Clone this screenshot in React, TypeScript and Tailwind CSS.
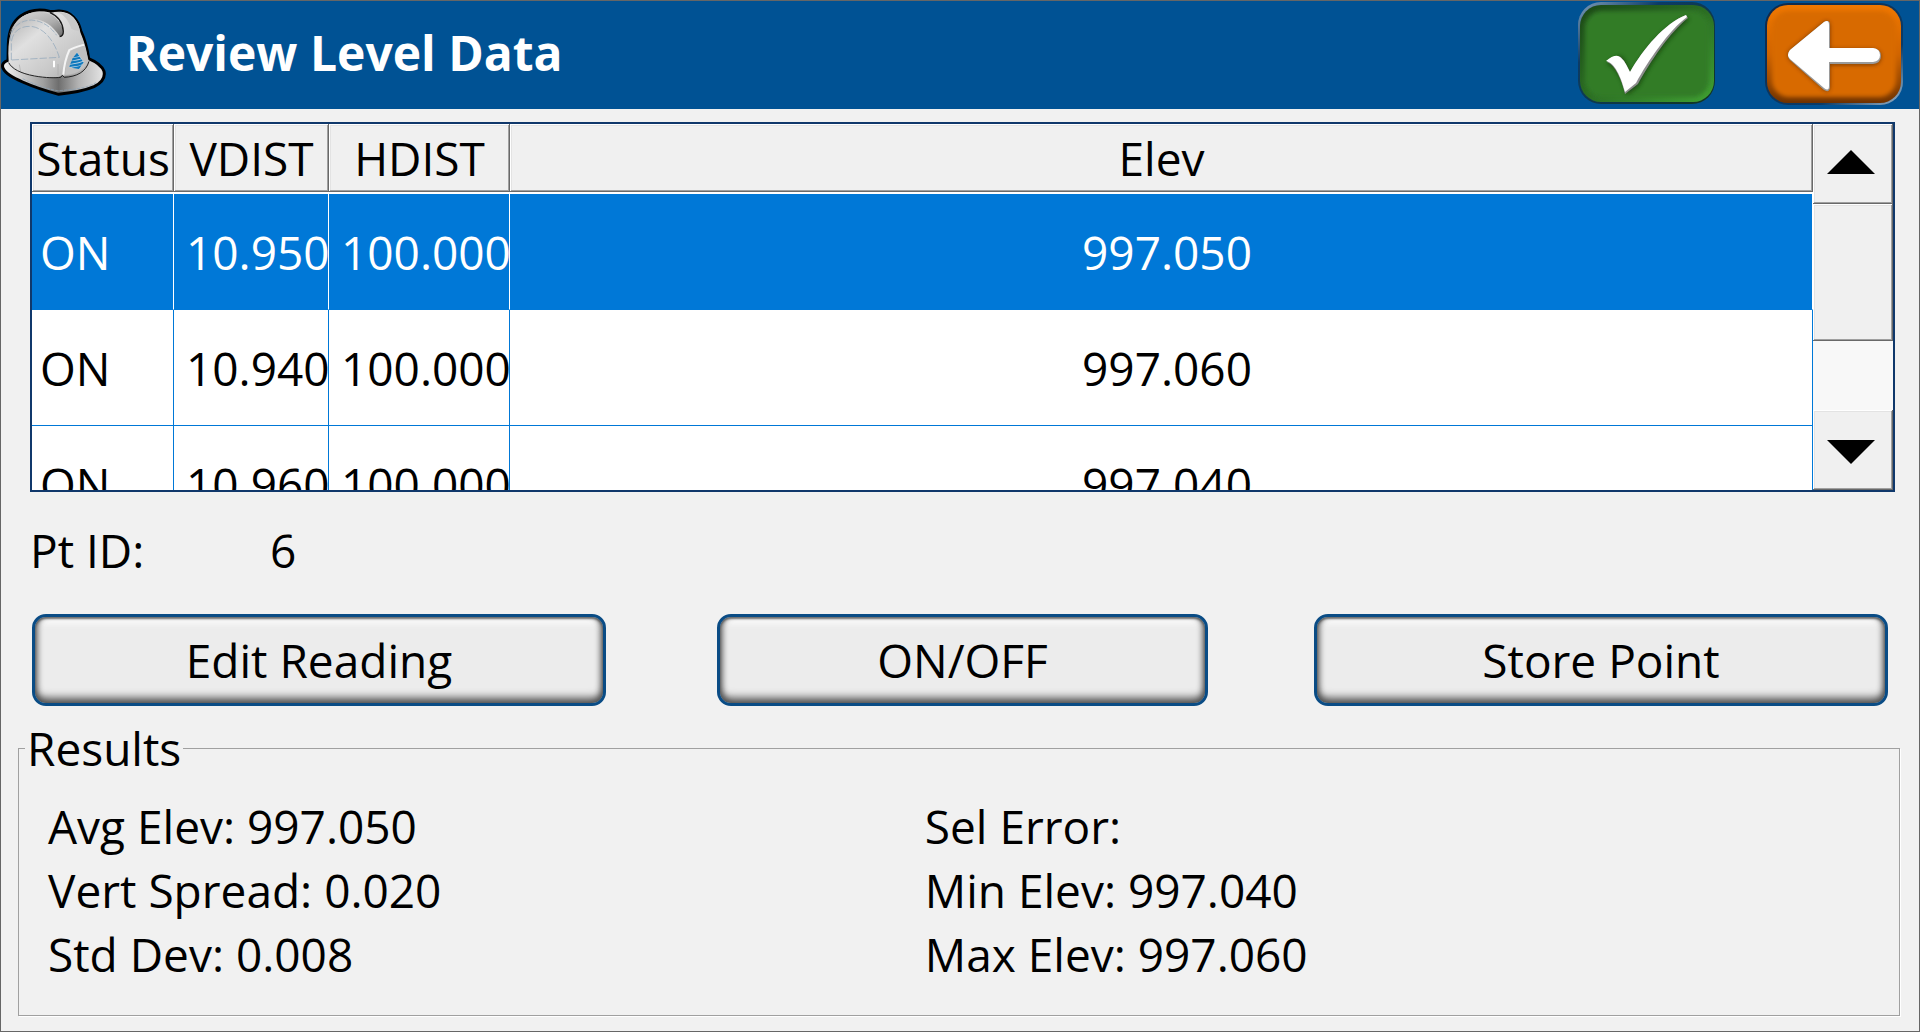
import React, { useState } from 'react'

type Reading = {
    status: string;
    vdist: string;
    hdist: string;
    elev: string;
}

const readings: Reading[] = [
    { status: 'ON', vdist: '10.950', hdist: '100.000', elev: '997.050' },
    { status: 'ON', vdist: '10.940', hdist: '100.000', elev: '997.060' },
    { status: 'ON', vdist: '10.960', hdist: '100.000', elev: '997.040' },
]

// Raised edge shared by the column headers and the scroll bar
const bevel = 'bg-[#f0f0f0] shadow-[inset_-1px_-1px_#696969,inset_1px_1px_#fff,inset_-2px_-2px_#a0a0a0,inset_2px_2px_#e3e3e3]';

const HardHat = () => (
    <svg viewBox="3 3 321 324" className="w-[107px] h-[108px] shrink-0" aria-hidden="true">
        <defs>
            <linearGradient id="shell" x1="0" y1="0" x2="1" y2="1">
                <stop offset="0" stopColor="#a8a8a8" />
                <stop offset="0.35" stopColor="#e0e0e0" />
                <stop offset="0.7" stopColor="#c8c8c8" />
                <stop offset="1" stopColor="#a0a0a0" />
            </linearGradient>
            <linearGradient id="brim" x1="0" y1="0" x2="1" y2="0">
                <stop offset="0" stopColor="#f4f4f4" />
                <stop offset="0.4" stopColor="#a0a0a0" />
                <stop offset="0.55" stopColor="#6e6e6e" />
                <stop offset="0.75" stopColor="#b4b4b4" />
                <stop offset="1" stopColor="#e6e6e6" />
            </linearGradient>
            <linearGradient id="ridge" x1="0" y1="0" x2="1" y2="1">
                <stop offset="0" stopColor="#ededed" />
                <stop offset="0.6" stopColor="#9c9c9c" />
                <stop offset="1" stopColor="#4a4a4a" />
            </linearGradient>
        </defs>
        <path d="M24 181 C10 185 5 195 9 204 C16 222 42 234 68 246 C104 262 142 274 176 283 C212 279 254 272 282 260 C304 249 316 232 312 214 C306 198 290 186 266 176 C262 148 254 118 242 92 C236 62 212 32 176 33 C166 34 158 36 150 34 C122 27 88 30 62 48 C34 68 26 100 25 132 Z" fill="url(#brim)" stroke="#000" strokeWidth="9" strokeLinejoin="round" />
        <path d="M26 184 C22 120 32 76 64 52 C94 32 130 32 152 38 C176 32 204 34 220 52 C234 68 238 84 242 100 C254 128 262 154 265 190 C258 214 226 226 190 228 L186 226 C180 234 140 234 110 230 C74 224 42 212 26 196 Z" fill="url(#shell)" />
        <path d="M28 108 C36 76 66 54 94 56 C130 56 158 76 180 110 C186 108 191 102 190 95 C184 66 164 42 134 38 C94 32 62 46 44 72 C34 86 28 98 28 108 Z" fill="url(#ridge)" opacity="0.75" />
        <path d="M150 38 C174 48 188 68 190 94 C190 104 186 109 179 110" fill="none" stroke="#1a1a1a" strokeWidth="4" />
        <path d="M172 36 C192 44 206 62 214 86 C224 92 234 92 240 94 C236 62 210 32 172 36 Z" fill="#c9c9c9" />
        <path d="M34 180 V126 C38 96 58 78 92 79 C130 82 162 120 178 172 L34 180" fill="none" stroke="#8ba3b8" strokeWidth="2" strokeDasharray="22 6" />
        <path d="M30 122 C32 86 56 62 94 60 C126 62 152 80 170 106" fill="none" stroke="#8ba3b8" strokeWidth="2" strokeDasharray="18 5" />
        <path d="M58 194 L62 216 M174 192 V226" stroke="#aaaaaa" strokeWidth="2" />
        <path d="M162 182 V202" stroke="#ffffff" strokeWidth="6" />
        <path d="M190 224 C192 196 198 172 208 150 C222 142 238 138 252 134" fill="none" stroke="#f4f4f4" strokeWidth="6" />
        <path d="M196 224 C198 196 204 172 212 154 C224 146 240 142 254 138 L266 182 C258 206 232 222 196 224 Z" fill="#c0c0c0" />
        <path d="M26 188 C36 206 60 220 104 228 C138 234 166 234 182 232 L187 226 L193 232 C230 230 258 216 267 184" fill="none" stroke="#222" strokeWidth="3" />
        <path d="M68 236 C100 252 136 266 172 272 C216 270 262 264 288 248" fill="none" stroke="#8ba3b8" strokeWidth="2" strokeDasharray="10 3" />
        {/* blue pyramid */}
        <path d="M231 157 L252 186 L238 208 L207 201 Z" fill="#c4d6e4" />
        <path d="M231 158 L220 172 L231 170 L238 168 Z M218 174 L233 172 L239 170 L243 176 L234 178 L215 182 Z M214 184 L235 181 L244 178 L248 183 L236 187 L211 192 Z M210 194 L236 190 L249 185 L251 187 L247 193 L236 197 L208 201 Z M214 203 L236 199 L245 195 L239 205 L236 207 Z" fill="#1079bd" />
    </svg>
)

const CheckIcon = () => (
    <svg viewBox="0 0 140 108" className="w-[140px] h-[108px]" aria-hidden="true">
        <defs>
            <linearGradient id="greenEdge" x1="0" y1="0" x2="1" y2="1">
                <stop offset="0" stopColor="#1b4716" />
                <stop offset="0.5" stopColor="#2c6e24" />
                <stop offset="1" stopColor="#41a233" />
            </linearGradient>
            <linearGradient id="greenRim" x1="0" y1="0" x2="1" y2="1">
                <stop offset="0" stopColor="#7f9db9" />
                <stop offset="0.3" stopColor="#0c3b66" />
                <stop offset="1" stopColor="#12351f" />
            </linearGradient>
            <filter id="soft"><feGaussianBlur stdDeviation="2" /></filter>
        </defs>
        <rect x="1" y="1" width="137" height="102" rx="23" fill="url(#greenRim)" />
        <rect x="3" y="4" width="134" height="97" rx="21" fill="url(#greenEdge)" />
        <rect x="8" y="10" width="124" height="86" rx="17" fill="#317b26" filter="url(#soft)" />
        <path d="M30 63 Q37 55 43 55 Q47 55 54 73 C67 49 89 23 110 16 L112 19 C94 33 74 62 62 85 L50 94 C45 77 38 65 30 63 Z" fill="#14380f" opacity="0.7" filter="url(#soft)" />
        <path d="M30 61 Q36 54 42 55 Q46 56 53 71 C66 48 88 22 109 14 L111 17 C93 31 73 61 61 83 L48 93 C44 77 38 64 30 61 Z" fill="#8d8d8d" />
        <path d="M29 60 Q36 54 41 55 Q46 56 53 71 C66 48 88 22 109 14 L110 16 C92 29 71 60 59 82 L48 91 C44 76 38 62 29 60 Z" fill="#fff" />
    </svg>
)

const BackIcon = () => (
    <svg viewBox="0 0 140 108" className="w-[140px] h-[108px]" aria-hidden="true">
        <defs>
            <linearGradient id="orangeEdge" x1="0" y1="0" x2="0" y2="1">
                <stop offset="0" stopColor="#f07800" />
                <stop offset="0.5" stopColor="#d06400" />
                <stop offset="1" stopColor="#6e3200" />
            </linearGradient>
            <linearGradient id="orangeRim" x1="0" y1="0" x2="1" y2="1">
                <stop offset="0" stopColor="#10294a" />
                <stop offset="0.7" stopColor="#0c3b66" />
                <stop offset="1" stopColor="#9db4c8" />
            </linearGradient>
        </defs>
        <rect x="1" y="2" width="138" height="102" rx="23" fill="url(#orangeRim)" />
        <rect x="3" y="4" width="134" height="98" rx="21" fill="url(#orangeEdge)" />
        <rect x="8" y="10" width="124" height="86" rx="17" fill="#d86b00" filter="url(#soft)" />
        <path d="M26 49 L60 21 Q65 18 66 24 V48 H109 Q117 49 117 56 Q117 63 109 64 H66 V87 Q65 92 60 89 L26 59 Q22 54 26 49 Z" fill="#5a2a00" opacity="0.7" filter="url(#soft)" />
        <path d="M26 49 L60 21 Q66 18 66 24 V47 H109 Q117 48 117 55 Q117 62 109 63 H66 V87 Q65 92 60 89 L26 59 Q22 54 26 49 Z" fill="#9a9a9a" />
        <path d="M26 49 L60 21 Q65 18 65 24 V47 H109 Q116 48 116 54 Q116 60 109 61 H65 V85 Q65 91 60 87 L26 58 Q22 54 26 49 Z" fill="#fff" />
    </svg>
)

const ActionButton = ({ label, className }: { label: string, className: string }) => (
    <button
        type="button"
        className={`h-[92px] rounded-[14px] border-[3px] border-[#0a4c85] bg-[#ececec] shadow-[inset_0_-8px_8px_-3px_#4f4f4f,inset_6px_0_6px_-4px_#555,inset_-6px_0_6px_-4px_#555,inset_0_2px_2px_#777,inset_0_8px_4px_#f6f6f6] ${className}`}
    >
        {label}
    </button>
)

const App = () => {

    const [selected, setSelected] = useState<number>(0);

    return (
        <div className="min-h-screen flex flex-col border border-[#666] bg-[#f1f1f1] text-black text-[46px] leading-[64px] font-['Open_Sans',sans-serif]">
            <header className="flex items-center h-[108px] bg-[#005294]">
                <HardHat />
                <h1 className="flex-1 pl-[18px] pb-1 text-[48px] font-bold text-white">Review Level Data</h1>
                <button type="button" aria-label="Accept"><CheckIcon /></button>
                <button type="button" aria-label="Back" className="ml-[47px] mr-[15px]"><BackIcon /></button>
            </header>

            <main className="flex-1 flex flex-col pt-[13px]">
                {/* Readings */}
                <div className="flex h-[370px] ml-[29px] mr-6 border-2 border-[#10386b] bg-white">
                    <div className="flex-1 overflow-hidden">
                        <table className="w-full table-fixed border-separate border-spacing-0 whitespace-nowrap">
                            <thead>
                                <tr className="h-[70px]">
                                    <th className={`w-[142px] p-0 font-normal border-b-2 border-white ${bevel}`}>Status</th>
                                    <th className={`w-[155px] p-0 font-normal border-b-2 border-white ${bevel}`}>VDIST</th>
                                    <th className={`w-[181px] p-0 font-normal border-b-2 border-white ${bevel}`}>HDIST</th>
                                    <th className={`p-0 font-normal border-b-2 border-white ${bevel}`}>Elev</th>
                                </tr>
                            </thead>
                            <tbody>
                                {readings.map((r, i) => {
                                    const line = selected === i ? 'border-r-white' : 'border-r-[#0078d7]';
                                    const cell = `p-0 overflow-hidden border-r border-b border-b-[#0078d7] ${line}`;
                                    return (
                                        <tr
                                            key={i}
                                            onClick={() => setSelected(i)}
                                            className={`h-[116px] ${selected === i ? 'bg-[#0078d7] text-white' : 'bg-white'}`}
                                        >
                                            <td className={`${cell} pl-2`}>{r.status}</td>
                                            <td className={`${cell} pl-3`}>{r.vdist}</td>
                                            <td className={`${cell} pl-3`}>{r.hdist}</td>
                                            <td className={`${cell} pl-3 text-center`}>{r.elev}</td>
                                        </tr>
                                    )
                                })}
                            </tbody>
                        </table>
                    </div>

                    {/* Scroll bar */}
                    <div className="flex flex-col w-20 bg-[#f8f8f8]">
                        <button type="button" aria-label="Scroll up" className={`flex items-center justify-center h-20 pr-1 pb-1 ${bevel}`}>
                            <svg viewBox="0 0 48 24" className="w-12 h-6"><path d="M24 0 L48 24 H0 Z" /></svg>
                        </button>
                        <div className={`h-[137px] ${bevel}`} />
                        <button type="button" aria-label="Scroll down" className={`flex items-center justify-center h-20 mt-auto pr-1 pt-1 ${bevel}`}>
                            <svg viewBox="0 0 48 24" className="w-12 h-6"><path d="M0 0 H48 L24 24 Z" /></svg>
                        </button>
                    </div>
                </div>

                <dl className="flex mt-[26px] pl-[29px]">
                    <dt className="w-60">Pt ID:</dt>
                    <dd>6</dd>
                </dl>

                {/* Actions */}
                <div className="flex mt-8 px-[31px]">
                    <ActionButton label="Edit Reading" className="grow-[575] basis-0" />
                    <ActionButton label="ON/OFF" className="grow-[491] basis-0 ml-[111px] mr-[106px]" />
                    <ActionButton label="Store Point" className="grow-[575] basis-0" />
                </div>

                {/* Results */}
                <fieldset className="flex-1 mt-2.5 ml-[17px] mr-[19px] mb-[15px] border border-[#a0a0a0] shadow-[1px_1px_#fff]">
                    <legend className="ml-1.5 px-0.5">Results</legend>
                    <div className="grid grid-cols-[9fr_10fr] mt-3.5 pl-[29px]">
                        <p>Avg Elev: 997.050</p>
                        <p>Sel Error:</p>
                        <p>Vert Spread: 0.020</p>
                        <p>Min Elev: 997.040</p>
                        <p>Std Dev: 0.008</p>
                        <p>Max Elev: 997.060</p>
                    </div>
                </fieldset>
            </main>
        </div>
    )
}

export default App
